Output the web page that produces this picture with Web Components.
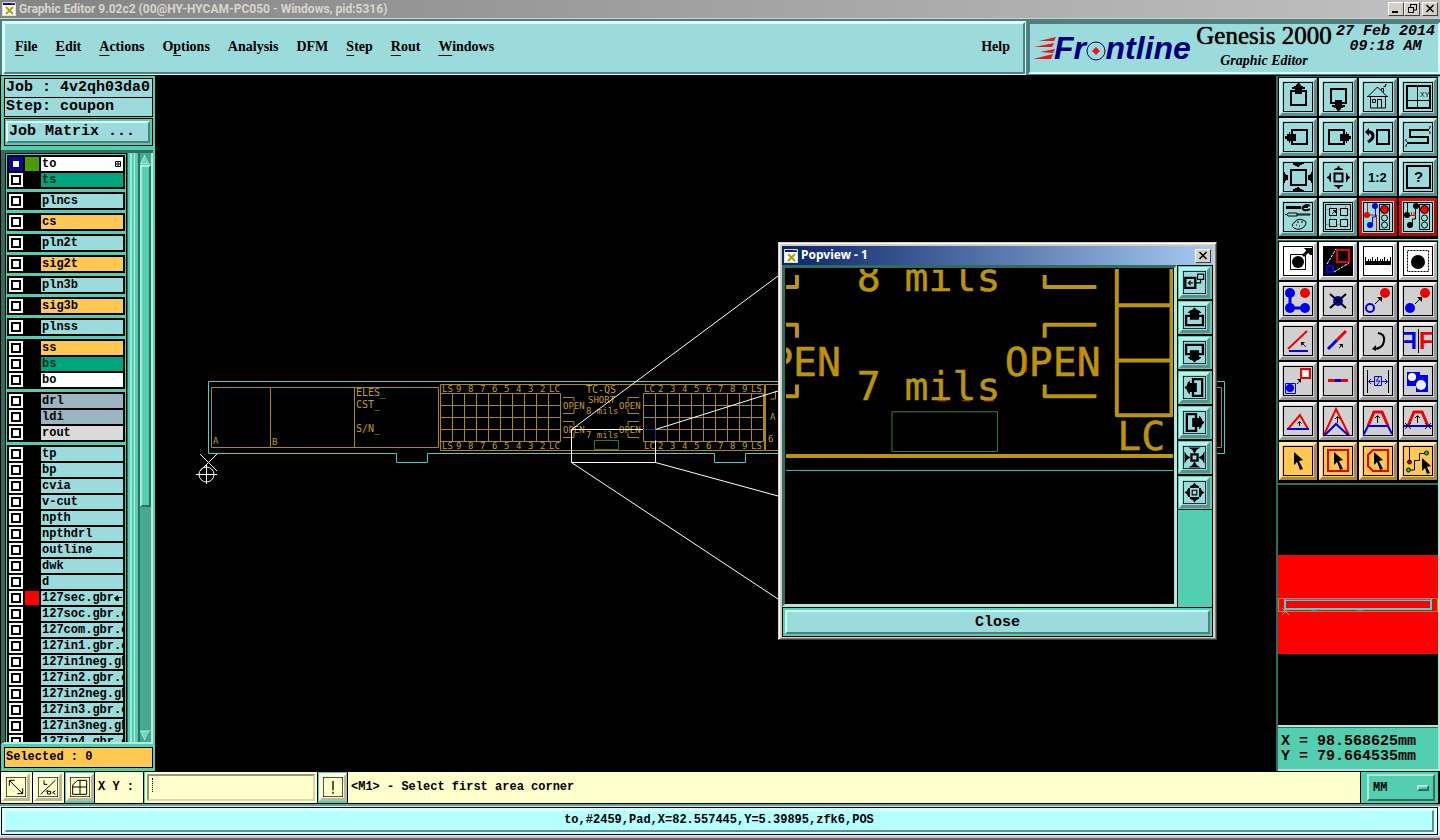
<!DOCTYPE html>
<html lang="en">
<head>
<meta charset="utf-8">
<title>Graphic Editor</title>
<style>
  html, body { margin: 0; height: 100%; background: #000; }
  body { overflow: hidden; font: bold 12px "Liberation Mono", monospace; color: #000; }
  editor-app { height: 100%; }
</style>
</head>
<body>
<editor-app></editor-app>
<script>
const BASE = `
  *, *::before { box-sizing: border-box; }
  button, input, select { font: inherit; color: inherit; margin: 0; padding: 0; border: 0; background: none; border-radius: 0; }
  svg { display: block; }
`;
function define(name, html, setup) {
  const tpl = document.createElement('template');
  tpl.innerHTML = `<style>${BASE}</style>` + html;
  customElements.define(name, class extends HTMLElement {
    constructor() {
      super();
      this.attachShadow({ mode: 'open' });
    }
    connectedCallback() {
      if (this.shadowRoot.childNodes.length) return;
      this.shadowRoot.append(tpl.content.cloneNode(true));
      if (setup) setup.call(this, this.shadowRoot);
    }
  });
}

/* ---------- icon drawings, each on a 30 x 30 field ---------- */
const L = (d, c = '#000', w = 1) => `<path d="${d}" fill="none" stroke="${c}" stroke-width="${w}"/>`;
const F = (d, c = '#000') => `<path d="${d}" fill="${c}"/>`;
const C = (x, y, r, c) => `<circle cx="${x}" cy="${y}" r="${r}" fill="${c}"/>`;
const BLUE = '#0000f0', RED = '#f00000';
const UP = 'M15 1l1 0 2 2v1h2v1h2v2h-3v5h-7v-5h-3v-2h2v-1h2v-1z';
const turn = (a, d) => `<g transform="rotate(${a} 15.5 15)">${d}</g>`;
const spin = (a, d) => `<g transform="rotate(${a} 15 15)">${d}</g>`;
const POPUP = L('M4 13h22v12H4z', '#000', 3) + F('M15 2l3 3 3 1 3 3h-3v9H9V9H6l3-3 3-1z');
const INWARD = F('M7 2h16l-5 3-3 5-3-5z');
const OUTWARD = F('M15 2l2 3 4 2v2H9V7l4-2z');
const CURSOR = 'M11 6l9 8-4 1 4 8-3 1-3-8-3 3z';
const TINY = L('M12 18l6-6') + F('M19 11v5l-5-5z');
const LIGHT = '<rect x="16.500" y="2.500" width="10" height="25" fill="#9cdbdb" stroke="#000"/><circle cx="21.500" cy="7.500" r="4" fill="#f00" stroke="#000"/><circle cx="21.500" cy="16" r="3" fill="none" stroke="#000"/><circle cx="21.500" cy="23" r="3" fill="none" stroke="#000"/>';
const ICONS = {
  up: L('M8 9h15v14H8z', '#000', 2) + F(UP),
  down: L('M8 7h15v14H8z', '#000', 2) + turn(180, F(UP)),
  home: L('M5 14.500L14.500 5l9.500 9.500M7.500 14v12h15V14M14.500 26V17.500h4V26M9.500 17.500h3v3h-3zM18.500 9V6.500h2V11M20.500 4.500h2v-2h1', '#000', 1) + L('M4 14.500h21'),
  views: L('M4 4h23v22H4z', '#000', 2) + L('M14.500 4v22M4 18.500h23', '#000', 1) + '<text x="17" y="15" font-family="Liberation Sans" font-size="7" font-weight="normal">XY</text>',
  left: L('M9 8h15v14H9z', '#000', 2) + F('M2 15v-1h2v-2h2v-2h1v2h6v7H7v2H6v-2H4v-2H2z'),
  right: L('M6 8h15v14H6z', '#000', 2) + F('M28 15v-1h-2v-2h-2v-2h-1v2h-6v7h6v2h1v-2h2v-2h2z'),
  previous: L('M14 8h12v14H14z', '#000', 2) + L('M4 10h3q3 1 3 4t-5 6', '#000', 3) + F('M2 10l4-4v8z'),
  snake: L('M26 8H7v7h18v6H5', '#000', 2) + L('M25 8l2-2v-2M25 8l2 2v2M5 21l-2-2v-2M5 21l-2 2v2'),
  zoomin: L('M8 8h15v15H8z', '#000', 2) + F('M10 1h11v1h-2v1h-2v1h-1v1h-2v-1h-2v-1h-2zM10 29h11v-1h-2v-1h-2v-1h-1v-1h-2v1h-2v1h-2zM1 10v11h1v-2h1v-1h2v-5h-2v-1h-1v-2zM29 10v11h-1v-2h-1v-1h-2v-5h2v-1h1v-2z'),
  zoomout: L('M11.500 11.500h8v8h-8z', '#000', 2) + F('M15 4h1l1 2 3 1v1h-9v-1l3-1zM15 27h1l1-2 3-1v-1h-9v1l3 1zM4 15v1l2 1 1 3h1v-9h-1l-1 3zM27 15v1l-2 1-1 3h-1v-9h1l1 3z'),
  ratio: '<text x="5" y="20" font-family="Liberation Sans" font-size="13" font-weight="bold">1:2</text>',
  help: L('M4 4h23v22H4z', '#000', 2) + '<text x="11" y="20" font-family="Liberation Sans" font-size="15" font-weight="bold">?</text>',
  tools: L('M3 5.500h15', '#000', 3) + L('M27 4q-3-2-6 0t0 4q3 1 6-1M21 5h4', '#000', 2) + L('M2 12.500h2l1-1.500h9v3H5l-1-1.500M14 12h13v1H14') + L('M12 20q2-4 8-2 4 1 3 4l-2 3q-5 4-10 1-4-3 1-6z') + L('M14 20h2M18 20h2M13 23h1M16 24h1'),
  panels: L('M2 7.500h26M2 22.500h26M7.500 2v26M22.500 2v26', '#9a9a9a') + '<g stroke="#000" fill="#9cdbdb"><rect x="6.500" y="6.500" width="7" height="7"/><rect x="17.500" y="6.500" width="7" height="7"/><rect x="6.500" y="17.500" width="7" height="7"/><rect x="17.500" y="17.500" width="7" height="7"/></g>' + L('M9 12l3-3M10 8.500h2.500v2.500') + L('M2.500 2.500h25v25h-25z'),
  netA: L('M4.500 1v12h9v16', RED, 1) + L('M12.500 4v11H9.500v8H6', BLUE, 1) + C(12, 4, 3, BLUE) + C(4, 13, 3, RED) + C(7, 23, 3, BLUE) + LIGHT,
  netB: L('M4.500 1v12M12.500 4v13H9.500v6H5') + L('M5 13.500h8M8.500 10v4M11 10v4', RED) + C(13, 4, 3, '#000') + C(4, 13, 3, '#000') + C(7, 23, 3, '#000') + LIGHT,
  select: L('M7.500 8.500h15v15h-15z') + C(15, 16, 6, '#000') + L('M20 10l6-6', '#000', 3) + F('M21 2h8v7h-2z'),
  popview: F('M0 0h30v30H0z') + L('M14 4h12v12H14z', RED, 2) + L('M4 20h6v6H4z', BLUE, 2) + `<g stroke-dasharray="3 1">${L('M4 18l9-15M11 26l15-9', '#fff')}</g>`,
  ruler: F('M2 15h26v4H2z') + L('M2.500 11v5M5.500 13v2M7.500 13v2M9.500 11v5M12.500 13v2M14.500 11v5M17.500 13v2M19.500 13v2M21.500 11v5M24.500 13v2M27.500 11v5'),
  area: `<g stroke-dasharray="2 1">${L('M4.500 4.500h21v21h-21z')}</g>` + C(15, 16, 7, '#000'),
  chain: L('M7 7v15h15', BLUE, 3) + C(7, 7, 5, BLUE) + C(7, 22, 5, BLUE) + C(22, 22, 5, BLUE) + C(22, 7, 5, RED),
  remove: C(15, 15, 5, BLUE) + L('M7 8l16 14M23 8L7 22', '#000', 2),
  copy: '<circle cx="7" cy="22" r="4" fill="none" stroke="#0000f0" stroke-width="2"/>' + C(22, 7, 5, RED) + TINY,
  move: C(7, 22, 5, BLUE) + C(22, 7, 5, RED) + TINY,
  angle: L('M5 23L24 5', RED, 2) + L('M6 25h19', BLUE, 2) + L('M23 21l-3-3') + F('M18 16h4l-4 4z'),
  extend: L('M5 23l9-9', BLUE, 3) + L('M14 14l9-9', RED, 3) + L('M16 22l3-3') + F('M20 18v4l-4-4z'),
  rotate: L('M15 7q7 1 6 8-1 7-9 8', '#000', 2) + F('M9 23l4-4v6z'),
  mirror: '<g font-family="Liberation Sans" font-weight="bold" font-size="23"><text x="16" y="23" fill="#f00000">F</text><g transform="translate(14 0) scale(-1 1)"><text x="0" y="23" fill="#0000f0">F</text></g></g>' + L('M15.500 3v24'),
  swap: L('M18 3h9v9h-9z', RED, 2) + C(22, 8, 3, '#fff') + L('M2.500 17.500h10v10h-10z', BLUE) + C(7, 22, 4, BLUE) + L('M14 18l3-3') + F('M18 13v4l-4-4z'),
  split: L('M5 14.500h20', RED, 3) + L('M12 14.500h6', BLUE, 3),
  between: L('M4.500 4v23M25.500 4v23') + L('M6 15.500h5M19 15.500h5M8 13l-2.500 2.500L8 18M22 13l2.500 2.500L22 18M11.500 10.500h7v9h-7zM16 11l-3 4h4l-3 4', BLUE),
  shapes: F('M4 6h13v3h8v17H13v-6H4z', BLUE) + C(9, 11, 4, '#fff') + C(18, 19, 5, '#eee'),
  tri: L('M5 23L17 9l8 14', RED, 2) + L('M4 23h22', BLUE, 2) + L('M16.500 20v-4M14.500 17.500l2-2 2 2'),
  peak: L('M1 29L13 3l13 26', RED, 2) + L('M2 29l11-11 12 11', BLUE, 2) + L('M14.500 17v-6M12 13l2.500-2.500L17 13'),
  trap: L('M5 20L11 6h8l6 14', RED, 3) + L('M1 28l4-8h20l4 8', BLUE, 2) + L('M14.500 17v-7M12 12l2.500-2.500L17 12'),
  trapx: L('M5 20L11 6h8l6 14', RED, 3) + L('M1 20h28', BLUE, 2) + L('M14.500 17v-7M12 12l2.500-2.500L17 12M2 17l6 6M8 17l-6 6M22 17l6 6M28 17l-6 6'),
  cursor: F(CURSOR),
  cursorbox: L('M5 4h20v21H5z', RED, 2) + F(CURSOR),
  cursorpoly: L('M10 4h15v21H10l-5-5V9z', RED, 2) + F(CURSOR),
  cursornet: L('M6.500 1v14M6 24h5.500V14.500h5V7.500H23') + '<g stroke="#000"><circle cx="6.500" cy="16" r="2" fill="#d00"/><circle cx="5.500" cy="24" r="2" fill="#2c2"/><circle cx="23.500" cy="7" r="2" fill="#2c2"/></g>' + F('M19 12l9 8-4 1 3 6-3 1-2-6-3 3z'),
  link: L('M3 9h13v13H3z', '#000', 3) + L('M17 15.500h6V11M19 4h8v7h-8zM7 15.500h6M10 12.500l-3 3 3 3', '#000', 1.5),
  popup: POPUP, popdown: spin(180, POPUP), popleft: spin(-90, POPUP), popright: spin(90, POPUP),
  gather: L('M11 11h8v8h-8z', '#000', 3) + INWARD + spin(90, INWARD) + spin(180, INWARD) + spin(270, INWARD),
  spread: L('M12 12h6v6h-6z', '#000', 1.5) + OUTWARD + spin(90, OUTWARD) + spin(180, OUTWARD) + spin(270, OUTWARD),
  fit: L('M5 5L25 25M25 25v-8M25 25h-8M5 5v8M5 5h8', '#000', 1.5),
  ortho: L('M4 26L26 5M9 5v6h5M12 22l3-3M14 25.500h5v-4h-5zM26 21l-4 2 4 3', '#000', 1.5),
  grid: L('M4 12l7-7h14v21H4zM15 5v21M4 15h21', '#000', 1.5),
  alert: L('M15 6v14', '#000', 2) + L('M15 22v3', '#000', 2)
};

define('tool-button', `
<style>
  :host { display: block; }
  button { display: block; width: var(--size, 38px); height: var(--size, 38px); padding: 1px;
    background: var(--face, #9cdbdb); border: 3px solid; border-color: var(--hi, #c8f2ee) var(--lo, #5d8f8f) var(--lo, #5d8f8f) var(--hi, #c8f2ee); }
  svg { width: 100%; height: 100%; }
  :host([tone=gray]) { --face: #d0d0d0; --hi: #efefef; --lo: #989898; }
  :host([tone=white]) { --face: #fff; --hi: #fff; --lo: #b4b4b4; }
  :host([tone=amber]) { --face: #ffc850; --hi: #ffe6b4; --lo: #ac8846; }
  :host([tone=red]) { --hi: #e01010; --lo: #b00c0c; }
  :host([tone=cream]) { --face: #ffffcc; --hi: #ffffe8; --lo: #b9b99a; }
  :host([size=xs]) { --size: 28px; }
</style>
<button type="button"><svg viewBox="0 0 30 30"></svg></button>`, function (root) {
  const name = this.getAttribute('icon');
  root.querySelector('button').setAttribute('aria-label', name);
  root.querySelector('svg').innerHTML = ICONS[name] + '<rect x=".5" y=".5" width="29" height="29" fill="none" stroke="#000"/>';
});

define('tool-grid', `
<style>
  :host { display: grid; grid-template-columns: repeat(4, 38px); gap: 2px; padding: 1px 0 3px 1px; background: #000; }
</style><slot></slot>`);

define('window-icon', `
<style>:host { display: block; } svg { width: 14px; height: 14px; }</style>
<svg viewBox="0 0 14 14"><path d="M0 0h14v14H0z" fill="#fff"/><path d="M0 0h14v3H0z" fill="#101080"/><path d="M9 1h4" stroke="#888"/><path d="M4 5l7 7M11 5l-7 7" stroke="#a5a500" stroke-width="2"/><path d="M.5.500h13v13H.5z" fill="none" stroke="#ddd"/></svg>`);

define('window-button', `
<style>
  :host { display: block; }
  button { display: block; width: 16px; height: 14px; padding-left: 1px; background: #d4d0c8; border: 1px solid; border-color: #fff #404040 #404040 #fff; }
  svg { width: 13px; height: 12px; }
</style>
<button type="button"><svg viewBox="0 0 13 12" fill="none" stroke="#000"></svg></button>`, function (root) {
  const kind = this.getAttribute('kind');
  root.querySelector('button').setAttribute('aria-label', kind);
  root.querySelector('svg').innerHTML = {
    minimize: '<path d="M2 9h6" stroke-width="2"/>',
    restore: '<path d="M5 1.500h6M4.500 1v3M10.500 1v6H8M2 4.500h6M2.500 4v5.500h5V4"/>',
    close: '<path d="M2.500 2l7 7M9.500 2l-7 7" stroke-width="1.500"/>'
  }[kind];
});

define('title-bar', `
<style>
  :host { display: flex; align-items: center; height: 18px; padding: 0 2px; background: linear-gradient(90deg, #848484, #c0c0c0);
    font: bold 12px Roboto, sans-serif; color: #d8d5cc; }
  .text { flex: 1; padding-left: 3px; line-height: 18px; white-space: nowrap; }
  .gap { margin-left: 2px; }
</style>
<window-icon></window-icon>
<div class="text"><slot></slot></div>
<window-button kind="minimize"></window-button><window-button kind="restore"></window-button><window-button class="gap" kind="close"></window-button>`);

define('menu-bar', `
<style>
  :host { display: flex; align-items: center; gap: 18px; padding: 0 13px 2px 10px; background: #9cdbdb;
    border: 2px solid; border-color: #d5fffa #4f8080 #4f8080 #d5fffa; outline: 1px solid #d5fffa;
    font: bold 14px "Liberation Serif", serif; }
  .help { margin-left: auto; }
  u { text-underline-offset: 4px; text-decoration-thickness: 1px; text-decoration-skip-ink: none; }
</style>
<button><u>F</u>ile</button><button><u>E</u>dit</button><button><u>A</u>ctions</button><button>O<u>p</u>tions</button><button>Analysis</button><button>DFM</button><button><u>S</u>tep</button><button><u>R</u>out</button><button><u>W</u>indows</button><button class="help">Help</button>`);

define('brand-panel', `
<style>
  :host { display: flex; width: 412px; background: #9cdbdb; border: 2px solid; border-color: #4f8080 #d5fffa #d5fffa #4f8080; }
  .logo { width: 165px; height: 50px; flex: none; }
  .name { width: 138px; text-align: center; font: 25px/24px "Liberation Serif", serif; text-shadow: 0 0 1px #000; }
  .name i { display: block; font: italic bold 14px/26px "Liberation Serif", serif; text-shadow: none; }
  .date { flex: 1; text-align: center; white-space: nowrap; font: italic bold 15px/15px "Liberation Mono", monospace; }
</style>
<svg class="logo" viewBox="1029 22 165 50">
  <g fill="#e81818"><path d="M1038 39l17-4-2 4zM1033 45l20-4-2 4zM1039 50l15-3-2 4zM1032 57l20-5-2 5z"/></g>
  <text x="1053" y="57" font-family="Liberation Sans" font-size="32" font-weight="bold" font-style="italic" fill="#00007c">Fr<tspan fill="none">o</tspan>ntline</text>
  <circle cx="1095" cy="49" r="9" fill="#9cdbdb" stroke="#00007c"/>
  <path d="M1095 45l4 4-4 4-4-4z" fill="#e81818"/>
</svg>
<div class="name">Genesis 2000<i>Graphic Editor</i></div>
<div class="date">27 Feb 2014<br>09:18 AM</div>`);

define('layer-row', `
<style>
  :host { display: grid; grid-template-columns: 14px 14px 1fr; gap: 2px; height: 14px; }
  input { appearance: none; width: 14px; height: 14px; background: #fff; display: grid; place-items: center; }
  input::before { content: ""; width: 10px; height: 10px; border: 2px solid #000; background: #fff; }
  input:checked { background: #0808a0; }
  input:checked::before { border-color: #0808a0; }
  .swatch { background: var(--swatch, #000); }
  label { display: flex; align-items: center; overflow: hidden; white-space: nowrap; padding-left: 1px; line-height: 14px; background: var(--tone, #9cdbdb); }
  svg { width: 8px; height: 8px; flex: none; }
  .mark { margin-left: auto; margin-right: 1px; }
  :host([tone=white]) { --tone: #fff; }
  :host([tone=green]) { --tone: #00a57c; }
  :host([tone=green]) label { color: #00281c; }
  :host([tone=amber]) { --tone: #ffc850; }
  :host([tone=slate]) { --tone: #9ab4c0; }
  :host([tone=gray]) { --tone: #dadada; }
</style>
<input type="checkbox" id="c"><span class="swatch"></span><label for="c"></label>`, function (root) {
  const label = root.querySelector('label');
  label.textContent = this.getAttribute('name');
  const sw = this.getAttribute('swatch');
  if (sw) this.style.setProperty('--swatch', sw);
  if (this.hasAttribute('checked')) root.querySelector('input').checked = true;
  const mark = this.getAttribute('mark');
  if (mark === 'plus') label.insertAdjacentHTML('beforeend', '<svg class="mark" viewBox="0 0 8 8"><path d="M1.500 1.500h5v5h-5zM4 1.500v5M1.500 4h5" fill="none" stroke="#000"/></svg>');
  if (mark === 'hand') label.insertAdjacentHTML('beforeend', '<svg viewBox="0 0 8 8"><path d="M0 4l4-3v2h4v1H5v3H2z"/></svg>');
});

define('layer-group', `<style>:host { display: grid; gap: 2px; padding: 2px; background: #000; }</style><slot></slot>`);

define('layer-panel', `
<style>
  :host { display: flex; flex-direction: column; padding: 2px 2px 3px 3px; background: #54ceb0; border-left: 1px solid #000; min-height: 0; }
  .line { height: 20px; margin-bottom: -1px; padding-left: 1px; border: 1px solid #000; background: #9cdbdb; font-size: 15px; line-height: 18px; white-space: nowrap; overflow: hidden; }
  .matrix { margin: 2px 0 4px; border: 1px solid #000; padding: 2px 2px 2px 1px; height: 28px; }
  .matrix button { display: block; width: 100%; height: 22px; text-align: left; padding-left: 1px; font-size: 15px; line-height: 16px; background: #9cdbdb; border: 2px solid; border-color: #d5fffa #4f8080 #4f8080 #d5fffa; }
  .body { flex: 1; min-height: 0; display: flex; margin-left: -3px; border-top: 3px solid #2f6d5e; border-bottom: 2px solid #aef0e0; border-left: 4px solid #2f6d5e; }
  .list { width: 122px; flex: none; overflow: hidden; display: flex; flex-direction: column; gap: 3px; border: 1px solid #000; border-bottom: 0; padding: 1px 1px 0; }
  .list ::slotted(*) { flex: none; }
  .edge { flex: 1; border-left: 1px solid #2f6d5e; background: linear-gradient(90deg, #54ceb0 2px, #98ead6 2px 4px, #54ceb0 4px 6px, #c0f5e8 6px 7px, #54ceb0 7px); }
  .scroll { width: 15px; flex: none; display: flex; flex-direction: column; padding: 0 2px 0 0; background: #44a990; border-left: 2px solid #2f6d5e; border-right: 2px solid #aef0e0; }
  .scroll svg { width: 11px; height: 12px; flex: none; }
  .thumb { flex: 0 0 58%; width: 11px; background: #54ceb0; border: 2px solid; border-color: #aef0e0 #2f6d5e #2f6d5e #aef0e0; }
  .rest { flex: 1; }
  .selected { height: 21px; margin-top: 3px; padding-left: 1px; border: 1px solid #000; background: #ffc850; line-height: 19px; }
</style>
<div class="line">Job : 4v2qh03da0</div>
<div class="line">Step: coupon</div>
<div class="matrix"><button>Job Matrix ...</button></div>
<div class="body">
  <div class="list"><slot></slot></div>
  <div class="edge"></div>
  <div class="scroll">
    <svg viewBox="0 0 11 12"><path d="M5.500 1l5 10h-10z" fill="#6cd8be" stroke="#aef0e0"/><path d="M5.500 1l5 10" stroke="#2f6d5e"/></svg>
    <div class="thumb"></div><div class="rest"></div>
    <svg viewBox="0 0 11 12"><path d="M5.500 11l5-10h-10z" fill="#6cd8be" stroke="#aef0e0"/><path d="M5.500 11l5-10" stroke="#2f6d5e"/></svg>
  </div>
</div>
<div class="selected">Selected : 0</div>`);

/* ---------- coupon drawing on the work canvas ---------- */
function boardSvg() {
  const t = (x, y, s) => `<text x="${x}" y="${y}">${s}</text>`;
  let lines = '', texts = '';
  for (const x0 of [440.5, 643.5]) {
    for (let i = 0; i <= 10; i++) lines += `M${x0 + i * 12} 393.500v48`;
    for (let j = 0; j <= 4; j++) lines += `M${x0} ${393.5 + j * 12}h120`;
  }
  for (const y of [392, 449]) {
    texts += t(442, y, 'LS') + t(549, y, 'LC') + t(644, y, 'LC') + t(751, y, 'LS');
    for (let i = 0; i < 8; i++) texts += t(456 + i * 12, y, 9 - i) + t(658 + i * 12, y, i + 2);
  }
  for (const y of [397.5, 421.5]) {
    lines += `M563 ${y}h11v4M563 ${y + 16}h11v-5M639 ${y}h-11v4M639 ${y + 16}h-11v-5`;
    texts += t(563, y + 11.5, 'OPEN') + t(619, y + 11.5, 'OPEN');
  }
  texts += t(588, 403, 'SHORT') + t(213, 444, 'A') + t(272, 445, 'B') + t(770, 420, 'A') + t(768, 442, '6');
  return `<g fill="none" stroke="#a8871c"><path d="${lines}M211.500 387.500h227v60h-227zM270.500 387v60M354.500 387v60M440.500 384.500h324v66h-324zM765.500 384.500h400v66h-400zM1180 387.500h41.500v60H1180M775.500 391v8h-5"/></g>
    <g fill="#c49e20" font-family="DejaVu Sans Mono" font-weight="normal" font-size="9">${texts}
      <g font-size="10">${t(586, 393, 'TC-QS')}${t(356, 396, 'ELES_')}${t(356, 408, 'CST_')}${t(356, 432, 'S/N_')}</g>
      ${t(586, 414, '8 mils')}${t(586, 438, '7 mils')}</g>
    <path d="M208.500 381.500h1016v72H745.500v9h-31v-9H427.500v9h-31v-9H208.500z" fill="none" stroke="#44cfcf"/>
    <path d="M594.500 440.500h24v9h-24z" fill="none" stroke="#3c7820"/>
    <g fill="none" stroke="#fff"><path d="M571.500 429.500h84v33h-84z"/><path d="M778 276L571.500 429.500M655.500 429.500L778 391M571.500 462.500L778 599M655.500 462.500L778 496M200 454l17 17M217 454l-17 17"/>
      <circle cx="206.500" cy="474.500" r="7.500"/><path d="M196 474.500h21M206.500 464v20"/></g>
    <path d="M643 429.500h12.500v11" fill="none" stroke="#2020b0"/>`;
}
define('board-canvas', `
<style>
  :host { display: block; position: relative; overflow: hidden; background: #000; min-width: 0; }
  svg { width: 1121px; height: 695px; }
  ::slotted(pop-view) { position: absolute; left: 623px; top: 166px; }
</style>
<svg viewBox="155 76 1121 695"></svg><slot></slot>`, function (root) {
  root.querySelector('svg').innerHTML = boardSvg();
});

define('pop-view', `
<style>
  :host { display: flex; flex-direction: column; width: 439px; background: #d4d0c8; border: 1px solid; border-color: #d4d0c8 #404040 #404040 #d4d0c8; padding: 3px 3px 2px; box-shadow: inset 1px 1px #fff, inset -1px -1px #808080; }
  .title { display: flex; align-items: center; height: 19px; padding: 0 2px; gap: 3px; color: #fff; font: bold 12px/18px "Noto Sans", sans-serif; background: linear-gradient(90deg, #0a246a, #a6caf0); }
  .title span { flex: 1; padding-bottom: 1px; }
  .body { display: flex; background: #000; }
  .view { flex: 1; min-width: 0; border: 3px solid; border-color: #2f6d5e #b0e8da #b0e8da #2f6d5e; }
  .view svg { width: 100%; height: 336px; border: 1px solid #000; }
  .side { display: flex; flex-direction: column; gap: 2px; width: 35px; min-width: 0; margin-left: 1px; padding-top: 1px; border-right: 1px solid #000; }
  .cell { padding: 1px 2px 1px 1px; height: 33px; background: #54ceb0; }
  .fill { flex: 1; background: #54ceb0; margin-top: -1px; }
  .foot { border: 1px solid #000; background: #54ceb0; padding: 2px; }
  .foot button { display: block; width: 100%; height: 24px; background: #9cdbdb; border: 2px solid; border-color: #c8fff6 #4f8080 #4f8080 #c8fff6; font-size: 15px; line-height: 20px; padding-top: 1px; }
  tool-button { --size: 31px; --hi: #b4f4ea; }
</style>
<div class="title"><window-icon></window-icon><span>Popview - 1</span><window-button kind="close"></window-button></div>
<div class="body">
  <div class="view">
    <svg viewBox="785 268 389 338" preserveAspectRatio="xMinYMin slice">
      <g fill="none" stroke="#bb9408" stroke-width="4" stroke-linejoin="round">
        <path d="M785 286h11v-12M785 324h11v13M785 396h11v-12M1097 286h-52v-12M1097 324h-52v13M1097 396h-52v-12"/>
        <path d="M1117.500 268v147h55V268M1117 304.500h55M1117 360h55M785 456h389"/>
      </g>
      <g fill="#bb9408" stroke="#bb9408" stroke-width=".5" font-family="DejaVu Sans Mono" font-weight="normal" font-size="40">
        <text x="856" y="290">8 mils</text><text x="856" y="400">7 mils</text>
        <text x="1005" y="376">OPEN</text><text x="744" y="376">OPEN</text><text x="1118" y="450">LC</text>
      </g>
      <path d="M938 400.500h8M962 400.500h8M984 400.500h10M1026.500 354v18M1080.500 350v24M819.500 350v24" fill="none" stroke="#d84800"/>
      <path d="M785 470.500h389" stroke="#3fb8c8"/>
      <path d="M891.500 411.500h106v40h-106z" fill="none" stroke="#3c8038"/>
    </svg>
  </div>
  <div class="side">
    <div class="cell"><tool-button icon="link"></tool-button></div>
    <div class="cell"><tool-button icon="popup"></tool-button></div>
    <div class="cell"><tool-button icon="popdown"></tool-button></div>
    <div class="cell"><tool-button icon="popleft"></tool-button></div>
    <div class="cell"><tool-button icon="popright"></tool-button></div>
    <div class="cell"><tool-button icon="gather"></tool-button></div>
    <div class="cell"><tool-button icon="spread"></tool-button></div>
    <div class="fill"></div>
  </div>
</div>
<div class="foot"><button>Close</button></div>`);

define('side-tools', `
<style>
  :host { display: flex; flex-direction: column; background: #54ceb0; border-left: 2px solid #2f6d5e; border-right: 2px solid #aee8dc; border-top: 1px solid #2f6d5e; min-height: 0; }
  .sep { height: 2px; background: #aee8dc; border-bottom: 1px solid #2f6d5e; flex: none; }
  .map { flex: 1; min-height: 0; background: #000; overflow: hidden; display: flex; align-items: center; border-top: 2px solid #2f6d5e; }
  .map svg { width: 160px; height: 238px; }
  .xy { height: 46px; padding: 7px 0 0 3px; border-top: 2px solid #aee8dc; border-bottom: 2px solid #aee8dc; box-shadow: inset 0 1px #2f6d5e; font-size: 15px; line-height: 15px; white-space: nowrap; }
  .xy div { height: 15px; }
</style>
<tool-grid>
  <tool-button icon="up"></tool-button><tool-button icon="down"></tool-button><tool-button icon="home"></tool-button><tool-button icon="views"></tool-button>
  <tool-button icon="left"></tool-button><tool-button icon="right"></tool-button><tool-button icon="previous"></tool-button><tool-button icon="snake"></tool-button>
  <tool-button icon="zoomin"></tool-button><tool-button icon="zoomout"></tool-button><tool-button icon="ratio"></tool-button><tool-button icon="help"></tool-button>
  <tool-button icon="tools"></tool-button><tool-button icon="panels"></tool-button><tool-button icon="netA" tone="red"></tool-button><tool-button icon="netB" tone="red"></tool-button>
</tool-grid>
<div class="sep"></div>
<tool-grid>
  <tool-button icon="select" tone="white"></tool-button><tool-button icon="popview" tone="white"></tool-button><tool-button icon="ruler" tone="white"></tool-button><tool-button icon="area" tone="white"></tool-button>
  <tool-button icon="chain" tone="gray"></tool-button><tool-button icon="remove" tone="gray"></tool-button><tool-button icon="copy" tone="gray"></tool-button><tool-button icon="move" tone="gray"></tool-button>
  <tool-button icon="angle" tone="gray"></tool-button><tool-button icon="extend" tone="gray"></tool-button><tool-button icon="rotate" tone="gray"></tool-button><tool-button icon="mirror" tone="gray"></tool-button>
  <tool-button icon="swap" tone="gray"></tool-button><tool-button icon="split" tone="gray"></tool-button><tool-button icon="between" tone="gray"></tool-button><tool-button icon="shapes" tone="gray"></tool-button>
  <tool-button icon="tri" tone="gray"></tool-button><tool-button icon="peak" tone="gray"></tool-button><tool-button icon="trap" tone="gray"></tool-button><tool-button icon="trapx" tone="gray"></tool-button>
  <tool-button icon="cursor" tone="amber"></tool-button><tool-button icon="cursorbox" tone="amber"></tool-button><tool-button icon="cursorpoly" tone="amber"></tool-button><tool-button icon="cursornet" tone="amber"></tool-button>
</tool-grid>
<div class="map"><svg viewBox="1278 486 160 238" fill="none">
  <path d="M1278 555h160v99h-160z" fill="#f00"/>
  <path d="M1278.500 598.500h159v13h-159z" stroke="#c88818"/>
  <path d="M1285 600h146v9h-146z" stroke="#38d8e8" stroke-width="2"/>
  <path d="M1285 599.500h146M1311 610.500h6M1357 610.500h6" stroke="#4868d8"/>
  <path d="M1282 608l7 7M1289 608l-7 7" stroke="#d09090"/>
</svg></div>
<div class="xy"><div>X = 98.568625mm</div><div>Y = 79.664535mm</div></div>`);

define('command-bar', `
<style>
  :host { display: flex; height: 33px; padding: 1px 2px 1px 1px; gap: 1px; background: #000; }
  .tool { width: 31px; padding: 1px; background: #ffffcc; }
  .teal { background: #54ceb0; width: 29px; }
  label { width: 48px; padding-left: 3px; background: #ffffcc; line-height: 31px; white-space: nowrap; }
  .field { position: relative; width: 173px; padding: 2px; background: #ffffcc; border-left: 1px solid #54ceb0; }
  .field::after { content: ""; position: absolute; left: 7px; top: 6px; height: 14px; border-left: 1px dotted #000; }
  input { width: 100%; height: 27px; padding-left: 3px; outline: 0; border: 2px solid; border-color: #96967a #d8d8b0 #d8d8b0 #96967a; }
  .msg { flex: 1; padding-left: 3px; background: #ffffcc; line-height: 31px; white-space: nowrap; overflow: hidden; }
  .unit { position: relative; width: 77px; padding: 2px 3px 2px 6px; background: #54ceb0; }
  select { appearance: none; width: 100%; height: 27px; padding-left: 4px; border: 2px solid; border-color: #aee8dc #2f6d5e #2f6d5e #aee8dc; }
  .bump { position: absolute; right: 9px; top: 13px; width: 12px; height: 6px; border: 2px solid; border-color: #aee8dc #2f6d5e #2f6d5e #aee8dc; pointer-events: none; }
</style>
<div class="tool"><tool-button icon="fit" tone="cream" size="xs"></tool-button></div>
<div class="tool"><tool-button icon="ortho" tone="cream" size="xs"></tool-button></div>
<div class="tool teal"><tool-button icon="grid" tone="cream" size="xs"></tool-button></div>
<label for="xy">X Y :</label>
<div class="field"><input id="xy" type="text"></div>
<div class="tool teal"><tool-button icon="alert" tone="cream" size="xs"></tool-button></div>
<div class="msg">&lt;M1&gt; - Select first area corner</div>
<div class="unit"><select aria-label="Units"><option>MM</option><option>Inch</option></select><span class="bump"></span></div>`);

define('status-line', `
<style>
  :host { display: block; height: 36px; padding: 2px 2px 0 1px; background: #d5f4f4; border-top: 2px solid #6f9a9a; border-bottom: 2px solid #606060; box-shadow: inset 0 -2px #c8c8c8; }
  div { height: 28px; margin-top: -1px; border: 1px solid #000; padding: 2px 3px; background: #d5ffff; }
  p { margin: 0; height: 22px; background: #b4ffff; border: 1px solid; border-color: #e4ffff #5f9090 #5f9090 #e4ffff; border-width: 1px 2px 2px 1px; text-align: center; line-height: 19px; }
</style>
<div><p><slot></slot></p></div>`);

const GROUPS = [
  [['to', 'white', '#4a9c00', 'plus'], ['ts', 'green']], [['plncs']], [['cs', 'amber']], [['pln2t']], [['sig2t', 'amber']],
  [['pln3b']], [['sig3b', 'amber']], [['plnss']], [['ss', 'amber'], ['bs', 'green'], ['bo', 'white']],
  [['drl', 'slate'], ['ldi', 'slate'], ['rout', 'gray']],
  [['tp'], ['bp'], ['cvia'], ['v-cut'], ['npth'], ['npthdrl'], ['outline'], ['dwk'], ['d'], ['127sec.gbr', '', '#f00', 'hand'],
    ...['127soc.gbr.o', '127com.gbr.o', '127in1.gbr.o', '127in1neg.gb', '127in2.gbr.o', '127in2neg.gb', '127in3.gbr.o', '127in3neg.gb', '127in4.gbr.o'].map(n => [n])]
];
const layers = GROUPS.map(g => '<layer-group>' + g.map(([n, tone = '', sw = '', mark = '']) =>
  `<layer-row name="${n}" tone="${tone}" swatch="${sw}" mark="${mark}"${n === 'to' ? ' checked' : ''}></layer-row>`).join('') + '</layer-group>').join('');

define('editor-app', `
<style>
  :host { display: flex; flex-direction: column; background: #000; overflow: hidden; }
  .head { display: flex; gap: 2px; height: 57px; padding: 3px 0 1px 3px; background: #4f8080; border-top: 1px solid #d4d0c8; }
  menu-bar { flex: 1; margin-right: 1px; }
  .main { flex: 1; min-height: 0; display: grid; grid-template-columns: 155px 1fr 164px; border-top: 1px solid #000; }
  .head, title-bar, command-bar, status-line { flex: none; }
</style>
<title-bar>Graphic Editor 9.02c2 (00@HY-HYCAM-PC050 - Windows, pid:5316)</title-bar>
<div class="head"><menu-bar></menu-bar><brand-panel></brand-panel></div>
<div class="main">
  <layer-panel>${layers}</layer-panel>
  <board-canvas><pop-view></pop-view></board-canvas>
  <side-tools></side-tools>
</div>
<command-bar></command-bar>
<status-line>to,#2459,Pad,X=82.557445,Y=5.39895,zfk6,POS</status-line>`);
</script>
</body>
</html>
